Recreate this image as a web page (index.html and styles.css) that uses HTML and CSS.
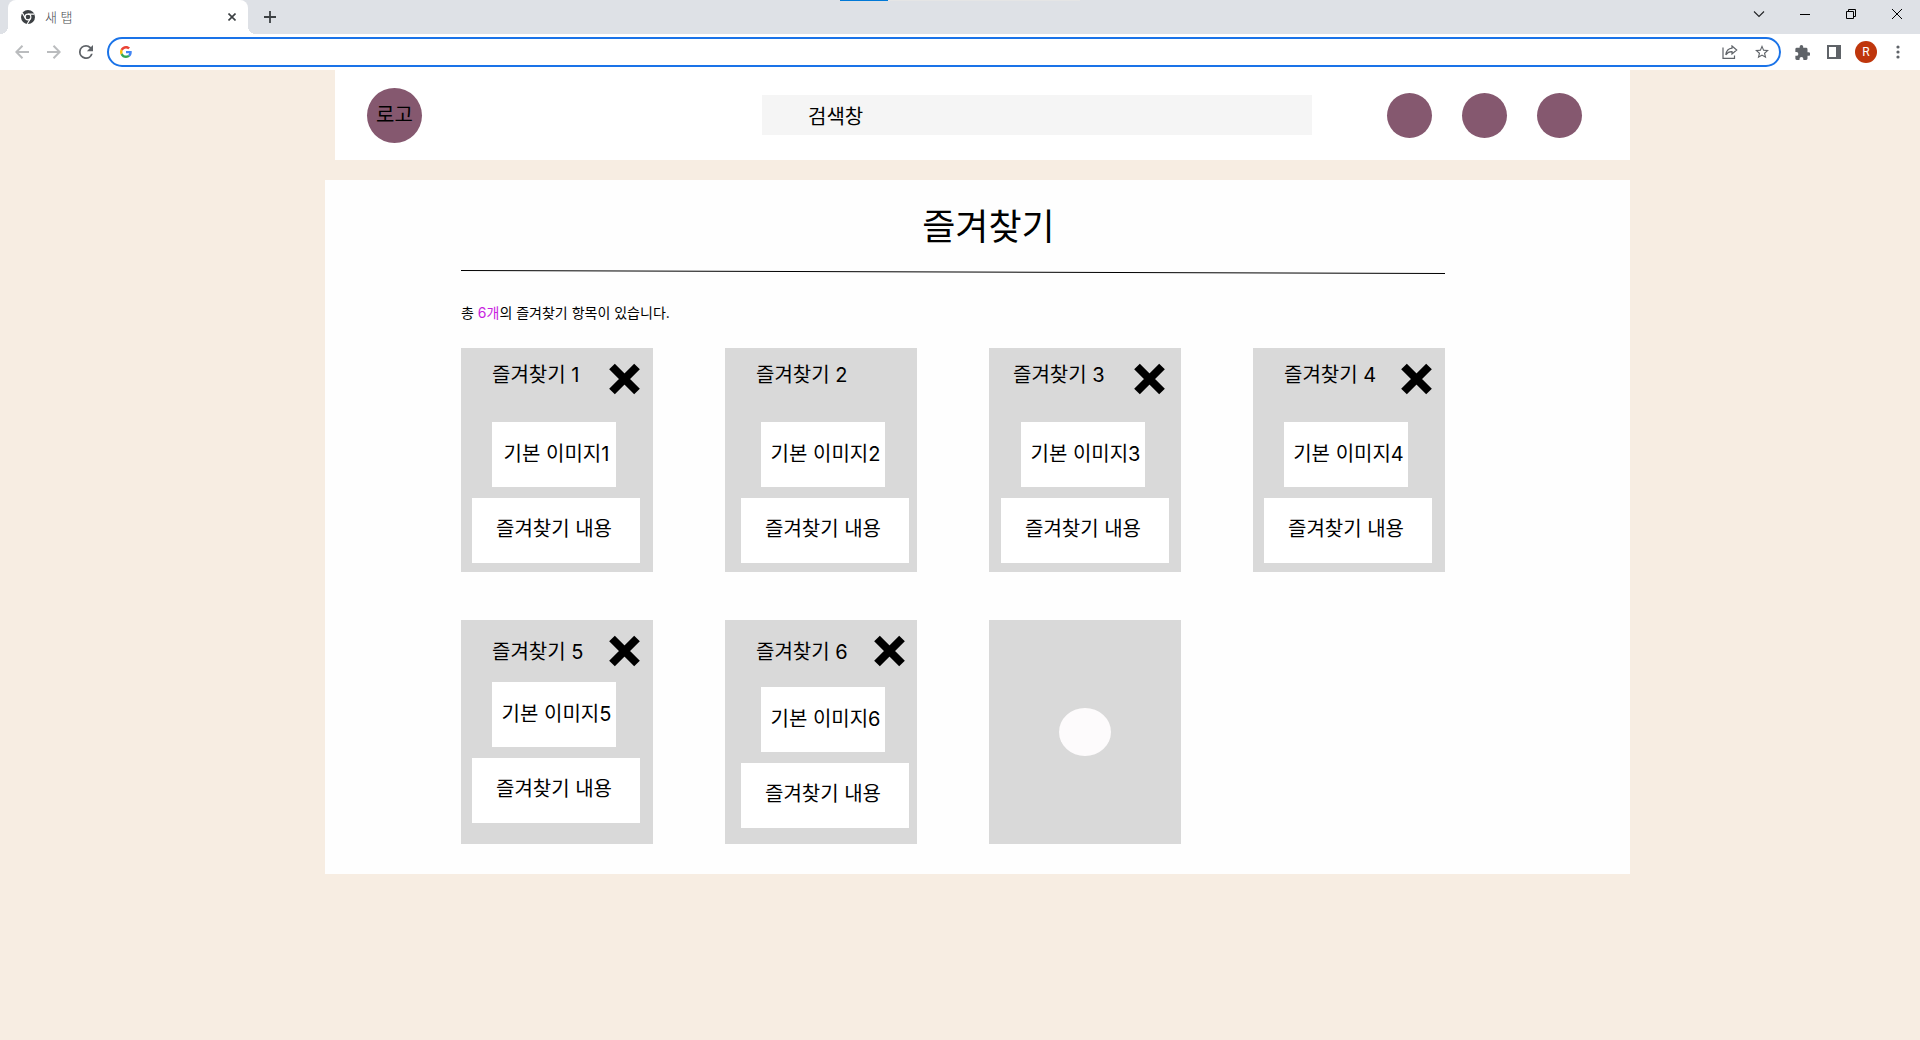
FILE: index.html
```html
<!DOCTYPE html>
<html lang="ko">
<head>
<meta charset="utf-8">
<title>즐겨찾기</title>
<link rel="stylesheet" href="styles.css">
</head>
<body>
<div class="browser">
  <div class="tab-strip">
    <div class="progress"><span class="progress-value"></span></div>
    <div class="tab">
      <svg class="tab-icon" width="14" height="14" viewBox="0 0 14 14"><circle cx="7" cy="7" r="7" fill="#3c4043"/><circle cx="7" cy="7" r="2.9" fill="none" stroke="#fff" stroke-width="1.1"/><path d="M7 4.1h6.4M4.5 8.4L1.3 2.9M9.5 8.4L6.3 13.9" stroke="#fff" stroke-width="1.1"/></svg>
      <span class="tab-title">새 탭</span>
      <button class="tab-close" aria-label="탭 닫기"><svg width="8" height="8" viewBox="0 0 8 8"><path d="M.5.5l7 7M7.5.5l-7 7" stroke="#3c4043" stroke-width="1.6"/></svg></button>
    </div>
    <button class="new-tab" aria-label="새 탭 열기"><svg width="12" height="12" viewBox="0 0 12 12"><path d="M6 0v12M0 6h12" stroke="#3c4043" stroke-width="1.8"/></svg></button>
    <div class="window-controls">
      <button aria-label="탭 검색"><svg width="12" height="12" viewBox="0 0 12 12"><path d="M1 3.5l5 5 5-5" fill="none" stroke="#202124" stroke-width="1.1"/></svg></button>
      <button aria-label="최소화"><svg width="10" height="10" viewBox="0 0 10 10"><path d="M0 5.5h10" stroke="#000"/></svg></button>
      <button aria-label="이전 크기로"><svg width="10" height="10" viewBox="0 0 10 10" fill="none" stroke="#000"><path d="M.5 2.5h7v7h-7zM2.5 2.5v-2h7v7h-2"/></svg></button>
      <button aria-label="닫기"><svg width="10" height="10" viewBox="0 0 10 10"><path d="M0 0l10 10M10 0L0 10" stroke="#000"/></svg></button>
    </div>
  </div>
  <div class="toolbar">
    <button class="tool" aria-label="뒤로"><svg width="14" height="14" viewBox="0 0 14 14" fill="none" stroke="#babcbe" stroke-width="2"><path d="M14 7H1.5M7.500.8L1.300 7l6.200 6.200"/></svg></button>
    <button class="tool" aria-label="앞으로"><svg width="14" height="14" viewBox="0 0 14 14" fill="none" stroke="#babcbe" stroke-width="2"><path d="M0 7h12.500M6.500.8L12.700 7l-6.200 6.200"/></svg></button>
    <button class="tool" aria-label="새로고침"><svg width="14" height="14" viewBox="4 4 16 16"><path fill="#5f6368" d="M17.650 6.350A7.960 7.960 0 0 0 12 4a8 8 0 1 0 7.730 10h-2.080A6 6 0 1 1 12 6c1.660 0 3.140.69 4.220 1.780L13 11h7V4z"/></svg></button>
    <div class="omnibox">
      <svg width="12" height="12" viewBox="0 0 48 48"><path fill="#EA4335" d="M24 9.500c3.540 0 6.710 1.220 9.210 3.600l6.850-6.850C35.900 2.380 30.470 0 24 0 14.620 0 6.510 5.380 2.560 13.220l7.980 6.190C12.430 13.720 17.740 9.500 24 9.500z"/><path fill="#4285F4" d="M46.980 24.550c0-1.570-.15-3.090-.38-4.550H24v9.020h12.940c-.58 2.960-2.260 5.480-4.780 7.180l7.730 6c4.510-4.180 7.090-10.360 7.090-17.650z"/><path fill="#FBBC05" d="M10.530 28.590A14.500 14.500 0 0 1 9.770 24c0-1.600.27-3.140.76-4.590l-7.980-6.190A23.900 23.900 0 0 0 0 24c0 3.880.92 7.540 2.560 10.780z"/><path fill="#34A853" d="M24 48c6.480 0 11.930-2.130 15.890-5.810l-7.730-6c-2.150 1.450-4.920 2.300-8.160 2.300-6.260 0-11.570-4.220-13.470-9.910l-7.980 6.190C6.510 42.620 14.620 48 24 48z"/></svg>
      <input class="address" type="text" aria-label="주소창">
      <button class="tool" aria-label="공유"><svg width="16" height="14" viewBox="0 0 16 14" fill="none" stroke="#5f6368" stroke-width="1.200"><path d="M1 2.500v10.900h11.500V10.500"/><path d="M10 1l4.700 4L10 9V6.700C7.500 6.600 5.500 7.500 3.800 9.800 4.300 6.300 6.200 3.600 10 3.200z"/></svg></button>
      <button class="tool" aria-label="북마크"><svg width="14" height="14" viewBox="2 2 20 20"><path fill="#5f6368" d="M22 9.240l-7.190-.62L12 2 9.190 8.630 2 9.240l5.460 4.730L5.820 21 12 17.270 18.180 21l-1.630-7.030zM12 15.400l-3.760 2.270 1-4.280-3.320-2.880 4.380-.38L12 6.100l1.710 4.040 4.380.38-3.320 2.880 1 4.280z"/></svg></button>
    </div>
    <div class="tools-end">
      <button class="tool" aria-label="확장 프로그램"><svg width="15" height="15" viewBox="1.500 1 21 21"><path fill="#5f6368" d="M20.500 11H19V7a2 2 0 0 0-2-2h-4V3.500a2.500 2.500 0 0 0-5 0V5H4a2 2 0 0 0-2 2v3.800h1.500a2.700 2.700 0 0 1 0 5.400H2V20a2 2 0 0 0 2 2h3.800v-1.500a2.700 2.700 0 0 1 5.400 0V22H17a2 2 0 0 0 2-2v-4h1.500a2.500 2.500 0 0 0 0-5z"/></svg></button>
      <button class="tool" aria-label="측면 패널"><svg width="14" height="14" viewBox="0 0 14 14"><path fill="#5f6368" fill-rule="evenodd" d="M0 0h14v14H0zM2 2v10h7V2z"/></svg></button>
      <button class="tool" aria-label="프로필"><span class="avatar">R</span></button>
      <button class="tool" aria-label="메뉴"><svg width="4" height="14" viewBox="0 0 4 14" fill="#5f6368"><circle cx="2" cy="2" r="1.600"/><circle cx="2" cy="7" r="1.600"/><circle cx="2" cy="12" r="1.600"/></svg></button>
    </div>
  </div>
</div>

<header class="site-header">
  <a class="logo" href="#">로고</a>
  <input class="search" type="search" value="검색창" aria-label="검색창">
  <nav class="shortcuts">
    <a class="dot" href="#" aria-label="메뉴 1"></a>
    <a class="dot" href="#" aria-label="메뉴 2"></a>
    <a class="dot" href="#" aria-label="메뉴 3"></a>
  </nav>
</header>

<main class="page">
  <h1 class="page-title">즐겨찾기</h1>
  <div class="content">
    <svg class="rule" viewBox="0 0 984 4" preserveAspectRatio="none"><path d="M0 .5L984 3.500" stroke="#000"/></svg>
    <p class="summary">총 <span class="count">6개</span>의 즐겨찾기 항목이 있습니다.</p>
    <div class="cards">
      <article class="card">
        <div class="card-head"><h2>즐겨찾기 1</h2><button class="remove" aria-label="즐겨찾기 1 삭제"><svg viewBox="0 0 31 32"><path d="M3 3.500l25 25M28 3.500l-25 25"/></svg></button></div>
        <div class="thumb">기본 이미지1</div>
        <p class="desc">즐겨찾기 내용</p>
      </article>
      <article class="card inset">
        <div class="card-head"><h2>즐겨찾기 2</h2></div>
        <div class="thumb">기본 이미지2</div>
        <p class="desc">즐겨찾기 내용</p>
      </article>
      <article class="card near">
        <div class="card-head"><h2>즐겨찾기 3</h2><button class="remove" aria-label="즐겨찾기 3 삭제"><svg viewBox="0 0 31 32"><path d="M3 3.500l25 25M28 3.500l-25 25"/></svg></button></div>
        <div class="thumb">기본 이미지3</div>
        <p class="desc">즐겨찾기 내용</p>
      </article>
      <article class="card">
        <div class="card-head"><h2>즐겨찾기 4</h2><button class="remove" aria-label="즐겨찾기 4 삭제"><svg viewBox="0 0 31 32"><path d="M3 3.500l25 25M28 3.500l-25 25"/></svg></button></div>
        <div class="thumb">기본 이미지4</div>
        <p class="desc">즐겨찾기 내용</p>
      </article>
      <article class="card compact">
        <div class="card-head"><h2>즐겨찾기 5</h2><button class="remove" aria-label="즐겨찾기 5 삭제"><svg viewBox="0 0 31 32"><path d="M3 3.500l25 25M28 3.500l-25 25"/></svg></button></div>
        <div class="thumb">기본 이미지5</div>
        <p class="desc">즐겨찾기 내용</p>
      </article>
      <article class="card medium inset">
        <div class="card-head"><h2>즐겨찾기 6</h2><button class="remove" aria-label="즐겨찾기 6 삭제"><svg viewBox="0 0 31 32"><path d="M3 3.500l25 25M28 3.500l-25 25"/></svg></button></div>
        <div class="thumb">기본 이미지6</div>
        <p class="desc">즐겨찾기 내용</p>
      </article>
      <article class="card add-card"><button class="add" aria-label="즐겨찾기 추가"></button></article>
    </div>
  </div>
</main>
</body>
</html>
```
FILE: styles.css
```css
* {
  box-sizing: border-box;
}

body {
  margin: 0;
  background: #f7ede2;
  color: #000;
  font-family: Inter, "Noto Sans CJK KR", sans-serif;
  font-size: 20px;
  line-height: 24px;
}

button {
  display: flex;
  align-items: center;
  justify-content: center;
  padding: 0;
  border: 0;
  background: none;
  font: inherit;
}

h1, h2, p {
  margin: 0;
  font-weight: 400;
}

/* Browser bar */
.tab-strip {
  position: relative;
  display: flex;
  height: 34px;
  padding-left: 8px;
  background: #dee1e6;
}

.progress {
  position: absolute;
  top: 0;
  left: 50%;
  width: 240px;
  height: 1px;
  margin-left: -120px;
  background: #e5e5e5;
}

.progress-value {
  display: block;
  width: 20%;
  height: 1px;
  background: #0078d7;
}

.tab {
  position: relative;
  display: flex;
  align-items: center;
  width: 240px;
  padding: 0 12px 0 13px;
  border-radius: 8px 8px 0 0;
  background: #fff;
}

.tab::before,
.tab::after {
  content: "";
  position: absolute;
  bottom: 0;
  width: 8px;
  height: 8px;
}

.tab::before {
  right: 100%;
  background: radial-gradient(circle at 0 0, #dee1e6 8px, #fff 8px);
}

.tab::after {
  left: 100%;
  background: radial-gradient(circle at 100% 0, #dee1e6 8px, #fff 8px);
}

.tab-title {
  flex: 1;
  margin-left: 10px;
  color: #45494d;
  font-family: "Noto Sans CJK KR", sans-serif;
  font-size: 13px;
  font-weight: 300;
}

.new-tab {
  width: 44px;
  height: 34px;
}

.window-controls {
  display: flex;
  margin-left: auto;
}

.window-controls button {
  width: 46px;
  height: 28px;
}

.toolbar {
  display: flex;
  align-items: center;
  height: 36px;
  padding: 0 6px;
  background: #fff;
}

.tool {
  flex: none;
  width: 32px;
  height: 28px;
}

.omnibox {
  flex: 1;
  display: flex;
  align-items: center;
  height: 30px;
  margin: 0 5px;
  padding: 0 1px 0 11px;
  border: 2px solid #1a73e8;
  border-radius: 15px;
}

.address {
  flex: 1;
  min-width: 0;
  height: 24px;
  margin-left: 8px;
  border: 0;
  outline: 0;
  font: inherit;
  font-size: 14px;
}

.tools-end {
  display: flex;
}

.avatar {
  width: 22px;
  height: 22px;
  border-radius: 50%;
  background: #bf360c;
  color: #fff;
  font-family: Roboto, sans-serif;
  font-size: 12px;
  line-height: 22px;
}

/* Site header */
.site-header {
  display: flex;
  align-items: center;
  height: 90px;
  margin: 0 290px 0 335px;
  padding: 0 48px 0 32px;
  background: #fff;
}

.logo {
  width: 55px;
  height: 55px;
  border-radius: 50%;
  background: #85586f;
  color: #000;
  line-height: 54px;
  text-align: center;
  text-decoration: none;
}

.search {
  appearance: none;
  width: 550px;
  height: 40px;
  margin: 0 75px 0 auto;
  padding: 0 46px;
  border: 0;
  border-radius: 0;
  background: #f5f5f5;
  color: #000;
  font: inherit;
}

.shortcuts {
  display: flex;
  gap: 30px;
}

.dot {
  width: 45px;
  height: 45px;
  border-radius: 50%;
  background: #85586f;
}

/* Favourites */
.page {
  margin: 20px 290px 0 325px;
  padding-bottom: 30px;
  background: #fefefe;
}

.page-title {
  padding: 25px 0 0 22px;
  font-size: 36px;
  line-height: 44px;
  text-align: center;
}

.content {
  padding: 21px 185px 0 136px;
}

.rule {
  display: block;
  width: 100%;
  height: 4px;
}

.summary {
  padding: 27px 0 23px;
  font-size: 14px;
}

.count {
  color: #c81ee0;
}

.cards {
  display: grid;
  grid-template-columns: repeat(auto-fill, 192px);
  gap: 48px 72px;
}

.card {
  height: 224px;
  padding-left: 11px;
  background: #d9d9d9;
}

.card-head {
  display: flex;
  justify-content: space-between;
  align-items: flex-start;
  height: 74px;
  padding: 15px 13px 0 20px;
}

.card h2 {
  font-size: 20px;
  line-height: 24px;
}

.remove {
  width: 31px;
  height: 32px;
}

.remove svg {
  width: 31px;
  height: 32px;
  stroke: #000;
  stroke-width: 8;
}

.thumb,
.desc {
  display: flex;
  align-items: center;
  height: 65px;
  background: #fff;
}

.thumb {
  justify-content: center;
  width: 124px;
  margin-left: 20px;
  padding: 0 0 2px 5px;
}

.desc {
  width: 168px;
  margin-top: 11px;
  padding: 0 0 4px 24px;
}

.inset {
  padding-left: 16px;
}

.inset .card-head {
  padding: 15px 12px 0 15px;
}

.near {
  padding-left: 12px;
}

.near .card-head {
  padding: 15px 16px 0 12px;
}

.compact .card-head {
  height: 62px;
}

.medium .card-head {
  height: 67px;
}

.compact h2,
.medium h2 {
  padding-top: 5px;
}

.add-card {
  display: flex;
  align-items: center;
  justify-content: center;
  padding: 0;
}

.add {
  width: 52px;
  height: 48px;
  border-radius: 50%;
  background: #fdfbfc;
}
```
